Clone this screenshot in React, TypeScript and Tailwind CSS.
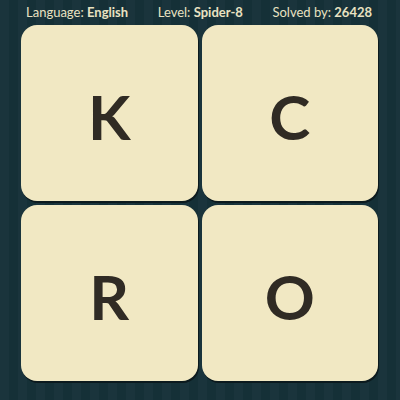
import React from "react";

const letters = ["K", "C", "R", "O"];

export default function App() {
  return (
    <div
      className="w-[400px] h-[400px] overflow-hidden flex flex-col bg-[repeating-linear-gradient(90deg,#1a343c_0px,#1a343c_9px,#153037_9px,#153037_18px)]"
      style={{ fontFamily: "Lato, 'Noto Sans', sans-serif" }}
    >
      <div className="h-[23px] flex items-center justify-between pl-[26px] pr-[28px] text-[13px] text-[#e9e2c2] leading-none pt-[1px]">
        <span>
          Language: <b className="font-bold">English</b>
        </span>
        <span>
          Level: <b className="font-bold">Spider-8</b>
        </span>
        <span>
          Solved by: <b className="font-bold">26428</b>
        </span>
      </div>
      <div className="grid grid-cols-2 gap-x-[4px] gap-y-[4px] pl-[21px] pr-[22px] pt-[2px]">
        {letters.map((l) => (
          <div
            key={l}
            className="h-[176px] rounded-[16px] bg-[#f1e8c3] shadow-[1px_2px_0_#0c1a1e] flex items-center justify-center"
          >
            <span className="text-[62px] font-bold text-[#302b24] leading-none translate-y-[3px]">
              {l}
            </span>
          </div>
        ))}
      </div>
    </div>
  );
}
